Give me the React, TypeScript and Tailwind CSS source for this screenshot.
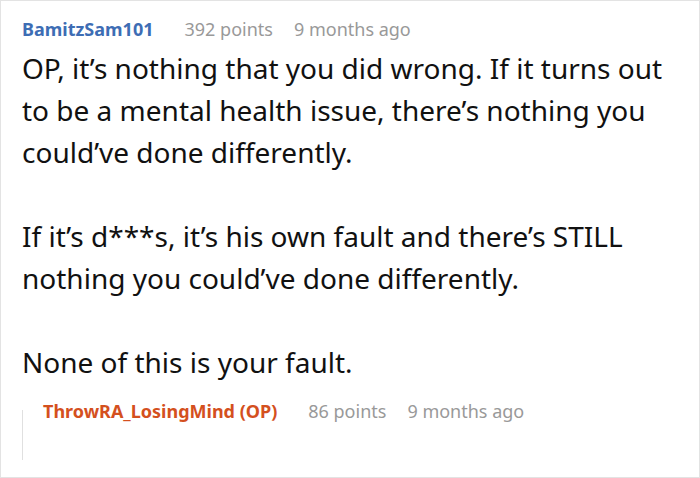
const App = () => {
    return (
        <div className="w-[700px] h-[478px] border border-[#e3e3e3] bg-white font-['Noto_Sans',sans-serif] overflow-hidden">
            <div className="pl-[21px] pr-3 pt-[15px]">
                <div className="flex items-center gap-[31px] text-[18px] leading-[26px]">
                    <span className="font-bold text-[#3d6db4]">BamitzSam101</span>
                    <div className="flex gap-[21px] text-[#999999]">
                        <span>392 points</span>
                        <span>9 months ago</span>
                    </div>
                </div>
                <div className="mt-[5px] text-[28px] leading-[42px] text-[#111111]">
                    <p>OP, it’s nothing that you did wrong. If it turns out to be a mental health issue, there’s nothing you could’ve done differently.</p>
                    <p className="mt-[42px]">If it’s d***s, it’s his own fault and there’s STILL nothing you could’ve done differently.</p>
                    <p className="mt-[42px]">None of this is your fault.</p>
                </div>
                <div className="mt-[17px] flex">
                    <div className="w-px h-[50px] mt-[10px] bg-[#e0e0e0]" />
                    <div className="pl-[20px] flex items-start gap-[31px] text-[18px] leading-[22px]">
                        <span className="font-bold text-[#d4501e]">ThrowRA_LosingMind (OP)</span>
                        <div className="flex gap-[21px] text-[#999999]">
                            <span>86 points</span>
                            <span>9 months ago</span>
                        </div>
                    </div>
                </div>
            </div>
        </div>
    );
};

export default App;
